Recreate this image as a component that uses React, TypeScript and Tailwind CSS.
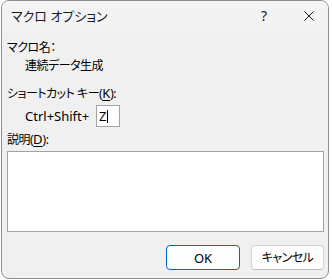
const font =
  "[font-family:'Noto_Sans','Noto_Sans_CJK_JP',sans-serif] [font-feature-settings:'palt']";

function CloseIcon() {
  return (
    <svg width="10" height="10" viewBox="0 0 10 10" className="block">
      <path d="M0.5 0.5L9.5 9.5M9.5 0.5L0.5 9.5" stroke="#1a1a1a" strokeWidth="1" />
    </svg>
  );
}

export default function App() {
  return (
    <div className="w-[332px] h-[280px] bg-white overflow-hidden">
      <div
        className={`ml-[1px] w-[328px] h-[279px] border border-[#8f8f8f] rounded-[8px] bg-[#f0f0f0] flex flex-col overflow-hidden text-[12px] text-black ${font}`}
      >
        {/* title bar */}
        <div className="h-[30px] shrink-0 bg-[#f3f3f3] flex items-center">
          <span className="ml-[9px] text-[13px] leading-[16px] text-[#1a1a1a]">マクロ オプション</span>
          <span className="ml-auto w-[10px] text-center text-[14px] leading-[16px] text-[#1a1a1a]">?</span>
          <span className="ml-[35px] mr-[14px]">
            <CloseIcon />
          </span>
        </div>

        <div className="flex flex-col pl-[5px] pr-[4px] tracking-[-0.5px]">
          <div className="mt-[8px] h-[17px] leading-[17px]">マクロ名：</div>
          <div className="mt-[1px] h-[17px] leading-[17px] pl-[18px]">連続データ生成</div>

          <div className="mt-[11px] h-[17px] leading-[17px]">
            ショートカット キー(<u className="underline-offset-2 text-[13px] tracking-normal">K</u>):
          </div>
          <div className="mt-[3px] h-[22px] flex items-center pl-[18px] tracking-normal">
            <span className="w-[71px] text-[13px] leading-[17px]">Ctrl+Shift+</span>
            <div className="w-[24px] h-[22px] border border-[#a3a3a3] bg-white flex items-center pl-[2px]">
              <span className="text-[13px] leading-[16px]">Z</span>
              <span className="ml-[1px] w-[1px] h-[13px] bg-black" />
            </div>
          </div>

          <div className="mt-[4px] h-[17px] leading-[17px]">
            説明(<u className="underline-offset-2 text-[13px] tracking-normal">D</u>):
          </div>
          <div className="mt-[3px] h-[81px] border border-[#a3a3a3] bg-white" />

          <div className="mt-[13px] flex justify-end gap-[11px]">
            <button className="w-[74px] h-[25px] rounded-[4px] border border-[#0067c0] bg-[#fdfdfd] text-[13px] leading-[16px] tracking-normal">
              OK
            </button>
            <button className="w-[73px] h-[25px] rounded-[4px] border border-[#d2d2d2] border-b-[#bdbdbd] bg-[#fdfdfd] leading-[16px]">
              キャンセル
            </button>
          </div>
        </div>
      </div>
    </div>
  );
}
